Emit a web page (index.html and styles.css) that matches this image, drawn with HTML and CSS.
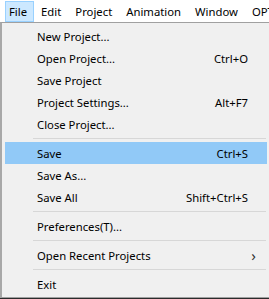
FILE: index.html
```html
<!DOCTYPE html>
<html lang="en">
<head>
    <meta charset="UTF-8">
    <title>File Menu</title>
    <link rel="stylesheet" href="styles.css">
</head>
<body>
    <div class="menubar">
        <span class="menubar-item active">File</span>
        <span class="menubar-item">Edit</span>
        <span class="menubar-item">Project</span>
        <span class="menubar-item">Animation</span>
        <span class="menubar-item">Window</span>
        <span class="menubar-item">OPTIONS</span>
    </div>

    <div class="dropdown">
        <div class="item"><span>New Project...</span></div>
        <div class="item"><span>Open Project...</span><span class="key">Ctrl+O</span></div>
        <div class="item"><span>Save Project</span></div>
        <div class="item"><span>Project Settings...</span><span class="key">Alt+F7</span></div>
        <div class="item"><span>Close Project...</span></div>
        <div class="sep"></div>
        <div class="item hover"><span>Save</span><span class="key">Ctrl+S</span></div>
        <div class="item"><span>Save As...</span></div>
        <div class="item"><span>Save All</span><span class="key">Shift+Ctrl+S</span></div>
        <div class="sep"></div>
        <div class="item"><span>Preferences(T)...</span></div>
        <div class="sep"></div>
        <div class="item"><span>Open Recent Projects</span><span class="arrow">&#x203A;</span></div>
        <div class="sep"></div>
        <div class="item"><span>Exit</span></div>
    </div>
</body>
</html>
```

FILE: styles.css
```css
body {
    margin: 0;
    background-color: #2b2b2b;
    font-family: "Noto Sans", "Open Sans", sans-serif;
    font-size: 11.3px;
    color: #000;
    overflow: hidden;
}

.menubar {
    display: flex;
    height: 22px;
    padding-left: 5px;
    background-color: #fff;
    white-space: nowrap;
    overflow: hidden;
}

.menubar-item {
    display: flex;
    align-items: center;
    padding: 0 7px;
    margin-top: 1px;
    height: 20px;
}

.menubar-item.active {
    padding: 0 6px 0 3px;
    height: 19px;
    background-color: #cce8ff;
    border: 1px solid #99d1ff;
}

.dropdown {
    width: 262px;
    padding: 2px 2px 2px 3px;
    background-color: #f0f0f0;
    border: 1px solid #a0a0a0;
    border-left: 2px solid #a8a8a8;
}

.item {
    display: flex;
    align-items: center;
    height: 22px;
    padding: 0 19px 0 32px;
}

.item span:first-child {
    flex: 1;
}

.item.hover {
    background-color: #91c9f7;
}

.key {
    text-align: right;
}

.arrow {
    font-size: 15px;
    margin-right: -8px;
    color: #333;
}

.sep {
    height: 1px;
    margin: 3px 1px 3px 28px;
    background-color: #d7d7d7;
}
```
